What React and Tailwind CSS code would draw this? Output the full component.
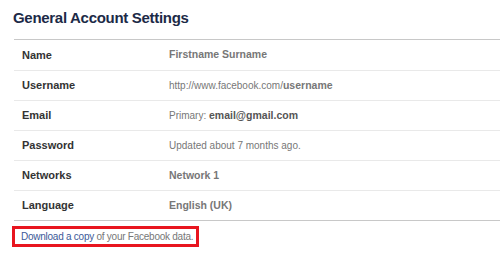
import React from 'react'

const rows = [
    { label: 'Name', value: <span className="font-bold text-[10.5px]">Firstname Surname</span> },
    {
        label: 'Username',
        value: (
            <>
                http://www.facebook.com/<span className="font-bold text-[10.5px]">username</span>
            </>
        ),
    },
    {
        label: 'Email',
        value: (
            <>
                Primary: <span className="font-bold text-[10.5px] text-[#555]">email@gmail.com</span>
            </>
        ),
    },
    { label: 'Password', value: 'Updated about 7 months ago.' },
    { label: 'Networks', value: <span className="font-bold text-[10.5px]">Network 1</span> },
    { label: 'Language', value: <span className="font-bold text-[10.5px]">English (UK)</span> },
]

const App = () => {
    return (
        <div className="w-[500px] h-[273px] bg-white font-['Liberation_Sans',Arial,sans-serif] overflow-hidden">
            <h1 className="pl-[13px] pt-[8px] h-[39px] text-[15px] tracking-[-0.3px] font-bold text-[#1c2a47] leading-[20px]">
                General Account Settings
            </h1>
            <div className="ml-[14px] border-t border-b border-[#c8c8c8]">
                {rows.map((row, i) => (
                    <div
                        key={row.label}
                        className={`flex items-center h-[30px] ${i > 0 ? 'border-t border-[#e9e9e9]' : ''}`}
                    >
                        <div className="pl-[8px] w-[155px] text-[11px] font-bold text-[#333]">
                            {row.label}
                        </div>
                        <div className="text-[10px] text-[#777]">{row.value}</div>
                    </div>
                ))}
            </div>
            <div className="ml-[12px] mt-[5px] w-[187px] h-[21px] border-[3px] border-[#e8151f] pl-[6px] text-[10px] leading-[15px] tracking-[-0.25px] text-[#777] whitespace-nowrap">
                <span className="text-[#3b5998]">Download a copy</span> of your Facebook data.
            </div>
        </div>
    )
}

export default App
